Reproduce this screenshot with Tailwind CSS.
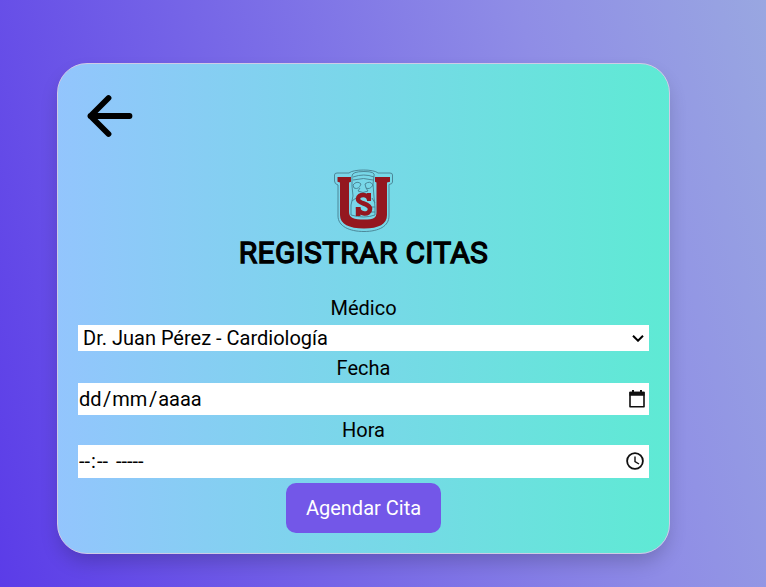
<!DOCTYPE html>
<html lang="es">
<head>
<meta charset="utf-8">
<title>Registrar Citas</title>
<script src="https://cdn.jsdelivr.net/npm/@tailwindcss/browser@4"></script>
</head>
<body class="h-[587px] overflow-hidden bg-[linear-gradient(75deg,#5b3ce8_0%,#8f8de6_73%,#99a7e1_100%)] pl-[57px] pt-[63px] font-[Roboto,sans-serif] text-xl leading-[30px] text-black">
  <main class="flex h-[491px] w-[613px] flex-col items-center rounded-[30px] border border-[#d0cbe5] bg-linear-to-r/srgb from-[#93c5fd] to-[#5eead4] bg-origin-border px-5 shadow-[0_10px_20px_-3px_rgba(0,0,0,0.2)]">
    <a class="mt-[30px] ml-2 self-start" aria-label="Volver">
      <svg class="block" width="48" height="46" viewBox="0 0 48 46" fill="none" stroke="#000" stroke-width="5.8" stroke-linecap="round" stroke-linejoin="round"><path d="M43.5 22H4.500M22.500 4 4.500 22l18 18"/></svg>
    </a>
    <svg class="mt-[29px] block shrink-0" width="62" height="64" viewBox="0 0 62 64" fill="none">
      <path d="M1.500 6Q1.500 4 4 4H16C20 0 41 0 45 4H57Q59.500 4 59.500 6V13Q59.500 15 56 15.500V47C56 57 46 62.500 31 62.500S5 57 5 47V16Q1.500 15 1.500 12Z" stroke="#477f90" stroke-width=".9"/>
      <path d="M4.500 8H18V12.800L16 13.500V43C16 49 21 50.500 31 50.500S43.500 49 43.500 43V13.500L42 12.800V8H57V12.800L54 13.500V46C54 55 46 59.500 31 59.500S7 55 7 46V13.500L4.500 12.800Z" fill="#94171f"/>
      <g stroke="#477f90" stroke-width=".9">
        <path d="M19 7Q19 2.500 31 2.500T41 7L40 15 41 28 42 38V46Q31 50 18 46V36L20 27 19 17Z"/>
        <path d="M20 8Q31 4 41 8M20 11Q31 8 40 11M20 16q4-5 8-1-2 6-7 4zM32 15q5-4 8 1-3 5-7 3zM27 19l-2 3q5 3 10 0l-2-3M19 32l4-3M39 29l3 5M39 38h3M38 43h4"/>
      </g>
      <path d="M36 30.500C35.500 24.500 25 24.500 25 30S37 33.500 37 40 25.500 46 25 38.500" stroke="#94171f" stroke-width="4.600"/>
      <path d="M34 24H38V32H34ZM22.800 38H27.500V47H22.800Z" fill="#94171f"/>
    </svg>
    <h1 class="mt-[5px] text-[30px] leading-[30px] font-normal tracking-[0.27px] [-webkit-text-stroke:1.3px_#000]">REGISTRAR CITAS</h1>
    <form class="mt-[25px] flex w-full flex-col items-center">
      <label>Médico</label>
      <div class="mt-[2px] flex h-[26px] w-full items-center justify-between bg-white pr-[5px] pl-[5px]">
        <span>Dr. Juan Pérez - Cardiología</span>
        <svg width="12" height="8" viewBox="0 0 12 8" fill="none" stroke="#000" stroke-width="2"><path d="M1 1.700l5 5 5-5"/></svg>
      </div>
      <label class="mt-[2px]">Fecha</label>
      <div class="flex h-8 w-full items-center justify-between bg-white pr-1 pl-px">
        <span class="flex"><span>dd</span><span class="pr-px pl-[1.5px]">/</span><span>mm</span><span class="pr-px pl-[1.5px]">/</span><span>aaaa</span></span>
        <svg width="16" height="18" viewBox="0 0 16 18" fill="none" stroke="#101010"><path d="M1 2.500h14v14.200H1z" stroke-width="1.600" stroke-linejoin="round"/><path d="M.5 1.700h15v4H.5zM3 0h2v2H3zM11 0h2v2h-2z" fill="#101010" stroke="none"/></svg>
      </div>
      <label>Hora</label>
      <div class="flex h-[33px] w-full items-center justify-between bg-white pr-[5px] pb-px pl-px">
        <span class="flex"><span>--</span><span class="px-px">:</span><span>--</span><span class="ml-[8px]">-----</span></span>
        <svg width="18" height="18" viewBox="0 0 18 18" fill="none" stroke="#101010"><circle cx="9" cy="9" r="7.900" stroke-width="1.800"/><path d="M9 4.500V9.500L13 12" stroke-width="1.400"/></svg>
      </div>
      <button type="button" class="mt-[5px] h-[50px] w-[155px] rounded-[10px] bg-[#7357e8] text-white">Agendar Cita</button>
    </form>
  </main>
</body>
</html>
